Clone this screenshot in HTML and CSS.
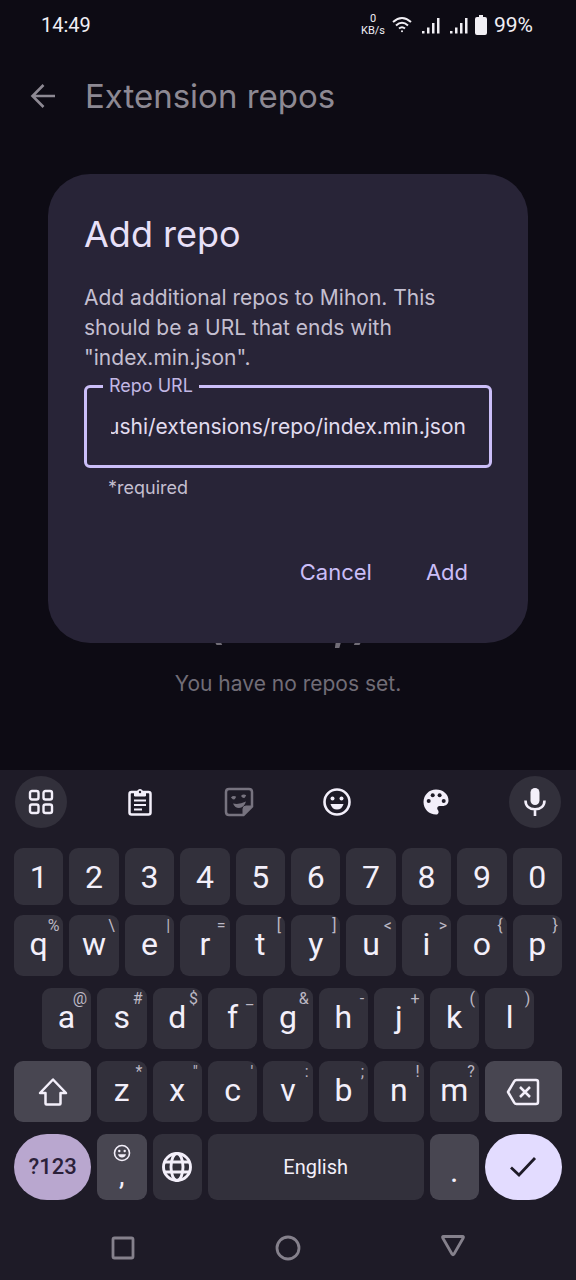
FILE: index.html
```html
<!DOCTYPE html>
<html lang="en">
<head>
<meta charset="utf-8">
<meta name="viewport" content="width=device-width, initial-scale=1">
<title>Extension repos</title>
<link rel="stylesheet" href="styles.css">
</head>
<body>
<div class="phone">
  <main class="app">
    <div class="status">
      <time>14:49</time>
      <div class="status-icons">
        <span class="speed"><span>0</span><span>KB/s</span></span>
        <svg width="20" height="18" viewBox="0 0 20 18" fill="none" stroke="currentColor" stroke-width="2"><path d="M1 6Q10-2 19 6M4 9.500Q10 4 16 9.500M7 12.500Q10 10 13 12.500"/><circle cx="10" cy="15.300" r="1" fill="currentColor" stroke="none"/></svg>
        <svg class="signal" width="18" height="17" viewBox="0 0 18 17" fill="currentColor"><path d="M0 14h2.500v2.500H0zM5 10.500h2.500v6H5zM10 6h2.500v10.500H10zM15 1h2.500v15.500H15z"/></svg>
        <svg class="signal" width="18" height="17" viewBox="0 0 18 17" fill="currentColor"><path d="M0 14h2.500v2.500H0zM5 10.500h2.500v6H5zM10 6h2.500v10.500H10zM15 1h2.500v15.500H15z"/></svg>
        <svg width="12" height="20" viewBox="0 0 12 20" fill="currentColor"><path d="M4 0h4v2h2q2 0 2 2v14q0 2-2 2H2q-2 0-2-2V4q0-2 2-2h2z"/></svg>
        <span class="level">99%</span>
      </div>
    </div>
    <header class="bar">
      <button class="back" aria-label="Back"><svg width="26" height="26" viewBox="0 0 26 26" fill="none" stroke="currentColor" stroke-width="2.600"><path d="M25 13H3M13.500 2L2.500 13l11 11"/></svg></button>
      <h1>Extension repos</h1>
    </header>
    <section class="empty">
      <div class="face" aria-hidden="true">(･o･;)</div>
      <p>You have no repos set.</p>
    </section>
    <div class="scrim">
      <form class="dialog" role="dialog" aria-labelledby="dialog-title">
        <h2 id="dialog-title">Add repo</h2>
        <p class="message">Add additional repos to Mihon. This should be a URL that ends with "index.min.json".</p>
        <div class="field">
          <label for="repo-url">Repo URL</label>
          <input id="repo-url" type="text" value="ushi/extensions/repo/index.min.json" aria-describedby="repo-help">
        </div>
        <p class="help" id="repo-help">*required</p>
        <div class="actions">
          <button type="button">Cancel</button>
          <button type="button">Add</button>
        </div>
      </form>
    </div>
  </main>

  <section class="keyboard" aria-label="Keyboard">
    <div class="tools">
      <button class="round" aria-label="Menu"><svg width="26" height="26" viewBox="0 0 26 26" fill="none" stroke="currentColor" stroke-width="2.400"><rect x="2" y="2" width="8.500" height="8.500" rx="2"/><rect x="15.500" y="2" width="8.500" height="8.500" rx="2"/><rect x="2" y="15.500" width="8.500" height="8.500" rx="2"/><rect x="15.500" y="15.500" width="8.500" height="8.500" rx="2"/></svg></button>
      <button aria-label="Clipboard"><svg width="26" height="30" viewBox="0 0 26 30" fill="none" stroke="currentColor" stroke-width="2.500"><rect x="2.500" y="5" width="21" height="22.500" rx="2"/><path d="M7.500 5h3a2.500 2.500 0 0 1 5 0h3v4h-11z" fill="currentColor" stroke-width="1"/><circle cx="13" cy="5" r="1.200" fill="#1e1b27" stroke="none"/><path d="M7 13.500h12M7 18h12M7 22.500h8" stroke-width="2.200"/></svg></button>
      <button class="dim" aria-label="Stickers"><svg width="30" height="30" viewBox="0 0 30 30" fill="none" stroke="currentColor" stroke-width="2.500"><path d="M19.500 28H5q-3 0-3-3V5q0-3 3-3h20q3 0 3 3v14.500z"/><path d="M19 28v-6q0-3 3-3h6z" fill="currentColor" stroke-width="1"/><path d="M9 16.500q6 1.500 13-2-2 6.500-7 6.500-4 0-6-4.500z" fill="currentColor" stroke="none"/><path d="M8 11.500q1.500-1.500 3.500-.5M18 10q1.500-1.500 3.500-.5" stroke-width="3"/></svg></button>
      <button aria-label="Emoji"><svg width="30" height="30" viewBox="0 0 30 30"><circle cx="15" cy="15" r="12.500" fill="none" stroke="currentColor" stroke-width="2.600"/><circle cx="10.500" cy="11.500" r="2" fill="currentColor"/><circle cx="19.500" cy="11.500" r="2" fill="currentColor"/><path d="M8.500 17h13q-1.500 5.500-6.500 5.500T8.500 17z" fill="currentColor"/></svg></button>
      <button aria-label="Theme"><svg width="26" height="26" viewBox="0 0 26 26"><path fill="currentColor" d="M13 .500C6 .500.500 6 .500 13S6 25.500 13 25.500c1.700 0 2.600-1.200 2.600-2.600 0-1.900-1.400-2-1.400-3.600 0-1.200 1-2.300 2.300-2.300h3c3.600 0 6-2.200 6-5.500C25.500 5.200 20 .500 13 .500z"/><g fill="#1e1b27"><circle cx="5.700" cy="12" r="2"/><circle cx="9.700" cy="6.300" r="2"/><circle cx="16.600" cy="6.300" r="2"/><circle cx="20.700" cy="12" r="2"/></g></svg></button>
      <button class="round" aria-label="Voice input"><svg width="24" height="30" viewBox="0 0 24 30"><rect x="7.500" y="1" width="9" height="17" rx="4.500" fill="currentColor"/><path d="M2.500 13.500c0 5.500 4 8.700 9.500 8.700s9.500-3.200 9.500-8.700M12 22v7" fill="none" stroke="currentColor" stroke-width="2.600"/></svg></button>
    </div>

    <div class="row numbers">
      <button>1</button><button>2</button><button>3</button><button>4</button><button>5</button><button>6</button><button>7</button><button>8</button><button>9</button><button>0</button>
    </div>
    <div class="row">
      <button>q<small>%</small></button><button>w<small>\</small></button><button>e<small>|</small></button><button>r<small>=</small></button><button>t<small>[</small></button><button>y<small>]</small></button><button>u<small>&lt;</small></button><button>i<small>&gt;</small></button><button>o<small>{</small></button><button>p<small>}</small></button>
    </div>
    <div class="row indent">
      <button>a<small>@</small></button><button>s<small>#</small></button><button>d<small>$</small></button><button>f<small>_</small></button><button>g<small>&amp;</small></button><button>h<small>-</small></button><button>j<small>+</small></button><button>k<small>(</small></button><button>l<small>)</small></button>
    </div>
    <div class="row">
      <button class="wide mod" aria-label="Shift"><svg width="30" height="30" viewBox="0 0 30 30" fill="none" stroke="currentColor" stroke-width="2.500" stroke-linejoin="round"><path d="M15 2.500L28 16h-5.500v10.500q0 1-1 1h-13q-1 0-1-1V16H2z"/></svg></button>
      <button>z<small>*</small></button><button>x<small>"</small></button><button>c<small>'</small></button><button>v<small>:</small></button><button>b<small>;</small></button><button>n<small>!</small></button><button>m<small>?</small></button>
      <button class="wide mod" aria-label="Delete"><svg width="34" height="28" viewBox="0 0 34 28" fill="none" stroke="currentColor" stroke-width="2.500" stroke-linejoin="round"><path d="M10.500 2H30q2 0 2 2v20q0 2-2 2H10.500q-1.500 0-2.300-1.300L2 14l6.200-10.700Q9 2 10.500 2zM14 9l10 10M24 9L14 19"/></svg></button>
    </div>
    <div class="row last">
      <button class="wide symbols">?123</button>
      <button class="mod comma" aria-label="Comma"><svg width="18" height="18" viewBox="0 0 18 18"><circle cx="9" cy="9" r="7.500" fill="none" stroke="currentColor" stroke-width="1.600"/><circle cx="6.300" cy="7" r="1.200" fill="currentColor"/><circle cx="11.700" cy="7" r="1.200" fill="currentColor"/><path d="M5 10.300h8q-1 3.300-4 3.300t-4-3.300z" fill="currentColor"/></svg><span>,</span></button>
      <button aria-label="Language"><svg width="32" height="32" viewBox="0 0 32 32" fill="none" stroke="currentColor" stroke-width="2.900"><circle cx="16" cy="16" r="13.500"/><ellipse cx="16" cy="16" rx="6" ry="13.500"/><path d="M4 11h24M4 21h24"/></svg></button>
      <button class="space">English</button>
      <button class="mod period">.</button>
      <button class="wide enter" aria-label="Done"><svg width="28" height="22" viewBox="0 0 28 22" fill="none" stroke="currentColor" stroke-width="2.800"><path d="M2 11.500l8 7.500L26 2"/></svg></button>
    </div>

    <nav class="system" aria-label="System">
      <button aria-label="Recents"><svg width="26" height="26" viewBox="0 0 26 26" fill="none" stroke="currentColor" stroke-width="2.800"><rect x="3" y="3" width="20" height="20" rx="1.500"/></svg></button>
      <button aria-label="Home"><svg width="26" height="26" viewBox="0 0 26 26" fill="none" stroke="currentColor" stroke-width="2.800"><circle cx="13" cy="13" r="11"/></svg></button>
      <button aria-label="Back"><svg width="26" height="26" viewBox="0 0 26 26" fill="none" stroke="currentColor" stroke-width="2.800" stroke-linejoin="round"><path d="M3.500 1.500h19q1.500 0 .7 1.500L14 19q-1 1.500-2 0L2.800 3q-.8-1.500.7-1.500z"/></svg></button>
    </nav>
  </section>
</div>
<script src="app.js"></script>
</body>
</html>
```

FILE: styles.css
```css
* {
  box-sizing: border-box;
}

body {
  margin: 0;
  background: #0d0b14;
  font-family: Inter, "Noto Sans CJK JP", sans-serif;
}

h1, h2, p {
  margin: 0;
  font-weight: 400;
}

button {
  margin: 0;
  padding: 0;
  border: 0;
  background: none;
  color: inherit;
  font: inherit;
}

svg {
  display: block;
}

.phone {
  display: flex;
  flex-direction: column;
  min-height: 100vh;
}

/* App behind the dialog */
.app {
  position: relative;
  flex: 1;
  display: flex;
  flex-direction: column;
}

.status {
  display: flex;
  justify-content: space-between;
  align-items: center;
  height: 50px;
  padding: 0 43px 0 41px;
  color: #f1eff4;
  font-family: Roboto, sans-serif;
  font-size: 20px;
}

.status-icons {
  display: flex;
  align-items: center;
  gap: 7px;
}

.signal {
  margin-left: 3px;
}

.level {
  font-size: 21px;
}

.speed {
  display: flex;
  flex-direction: column;
  align-items: center;
  font-size: 11px;
  line-height: 12px;
}

.bar {
  display: flex;
  align-items: center;
  gap: 29px;
  height: 92px;
  padding: 0 30px;
  color: #8d8993;
}

.bar h1 {
  font-size: 33px;
  line-height: 44px;
}

.empty {
  flex: 1;
  display: flex;
  flex-direction: column;
  align-items: center;
  justify-content: flex-end;
  padding-bottom: 71px;
  color: #716d77;
  font-size: 21px;
  line-height: 30px;
}

.face {
  margin-bottom: 21px;
  font-size: 66px;
  line-height: 72px;
}

/* Dialog */
.scrim {
  position: absolute;
  inset: 46px 0 0;
  display: flex;
  align-items: center;
  padding: 0 48px;
}

.dialog {
  flex: 1;
  padding: 36px;
  border-radius: 42px;
  background: #282437;
  color: #c4bfd0;
}

.dialog h2 {
  color: #e8e0f8;
  font-size: 36px;
  line-height: 48px;
}

.message {
  margin-top: 25px;
  font-size: 21px;
  line-height: 30px;
}

.field {
  position: relative;
  margin-top: 12px;
  padding: 0 23px 0 24px;
  border: 3px solid #cbbef8;
  border-radius: 6px;
}

.field label {
  position: absolute;
  top: -14px;
  left: 16px;
  padding: 0 6px;
  background: #282437;
  color: #c2b7e4;
  font-size: 18px;
  line-height: 24px;
}

.field input {
  display: block;
  width: 100%;
  height: 77px;
  padding: 0;
  border: 0;
  outline: 0;
  background: none;
  color: #e2dcef;
  font: inherit;
  font-size: 21px;
}

.help {
  padding: 8px 24px;
  font-size: 18px;
  line-height: 24px;
}

.actions {
  display: flex;
  justify-content: flex-end;
  gap: 6px;
  margin: 34px 0 5px;
  color: #cbbef8;
  font-size: 22px;
}

.actions button {
  height: 60px;
  padding: 0 24px;
}

/* Keyboard */
.keyboard {
  padding: 0 11px;
  background: #1e1b27;
  color: #f3effa;
  font-family: Roboto, sans-serif;
}

.tools {
  display: flex;
  justify-content: space-between;
  padding: 6px 4px 20px;
}

.tools button {
  display: grid;
  place-items: center;
  width: 52px;
  height: 52px;
  border-radius: 26px;
}

.tools .round {
  background: #32303b;
}

.tools .dim {
  color: #77737f;
}

.row {
  display: grid;
  grid-template-columns: repeat(20, 1fr);
  height: 61px;
  margin-bottom: 12px;
}

.row button {
  position: relative;
  display: grid;
  place-items: center;
  grid-column: span 2;
  margin: 0 3px;
  padding-bottom: 4px;
  border-radius: 9px;
  background: #32303b;
  font-size: 32px;
  line-height: 36px;
}

.row small {
  position: absolute;
  top: 2px;
  right: 4px;
  color: #bcb8c4;
  font-size: 16px;
  line-height: 18px;
}

.row.numbers {
  height: 57px;
  margin-bottom: 10px;
}

.row.numbers button,
.row.last button,
.row .wide {
  padding-bottom: 0;
}

.row.indent button:first-child {
  grid-column: 2 / span 2;
}

.row .wide {
  grid-column: span 3;
}

.row .mod {
  background: #484651;
}

.row.last {
  height: 66px;
  margin-bottom: 16px;
}

.row .space {
  grid-column: span 8;
  font-size: 20px;
}

.row .symbols {
  border-radius: 34px;
  background: #b9a7cf;
  color: #2b213a;
  font-size: 22px;
  font-weight: 500;
}

.row .comma {
  align-content: start;
  padding-top: 10px;
  font-size: 28px;
  line-height: 28px;
}

.row .period {
  padding-top: 8px;
}

.row .enter {
  border-radius: 34px;
  background: #e3dcff;
  color: #1e1b27;
}

.system {
  display: flex;
  justify-content: space-around;
  align-items: center;
  height: 64px;
  padding: 0 29px;
  color: #85818c;
}
```

FILE: app.js
```js
// Keep the end of a long URL in view.
const repoUrl = document.getElementById('repo-url');
repoUrl.scrollLeft = repoUrl.scrollWidth;
```
